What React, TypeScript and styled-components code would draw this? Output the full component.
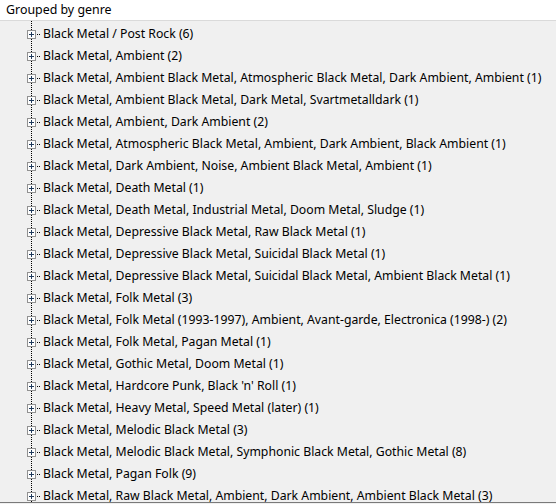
import React from "react";
import styled, { createGlobalStyle } from "styled-components";

const genres: string[] = [
    "Black Metal / Post Rock (6)",
    "Black Metal, Ambient (2)",
    "Black Metal, Ambient Black Metal, Atmospheric Black Metal, Dark Ambient, Ambient (1)",
    "Black Metal, Ambient Black Metal, Dark Metal, Svartmetalldark (1)",
    "Black Metal, Ambient, Dark Ambient (2)",
    "Black Metal, Atmospheric Black Metal, Ambient, Dark Ambient, Black Ambient (1)",
    "Black Metal, Dark Ambient, Noise, Ambient Black Metal, Ambient (1)",
    "Black Metal, Death Metal (1)",
    "Black Metal, Death Metal, Industrial Metal, Doom Metal, Sludge (1)",
    "Black Metal, Depressive Black Metal, Raw Black Metal (1)",
    "Black Metal, Depressive Black Metal, Suicidal Black Metal (1)",
    "Black Metal, Depressive Black Metal, Suicidal Black Metal, Ambient Black Metal (1)",
    "Black Metal, Folk Metal (3)",
    "Black Metal, Folk Metal (1993-1997), Ambient, Avant-garde, Electronica (1998-) (2)",
    "Black Metal, Folk Metal, Pagan Metal (1)",
    "Black Metal, Gothic Metal, Doom Metal (1)",
    "Black Metal, Hardcore Punk, Black 'n' Roll (1)",
    "Black Metal, Heavy Metal, Speed Metal (later) (1)",
    "Black Metal, Melodic Black Metal (3)",
    "Black Metal, Melodic Black Metal, Symphonic Black Metal, Gothic Metal (8)",
    "Black Metal, Pagan Folk (9)",
    "Black Metal, Raw Black Metal, Ambient, Dark Ambient, Ambient Black Metal (3)",
];

const GlobalStyle = createGlobalStyle`
    html, body {
        margin: 0;
        padding: 0;
        background: #f0f0f0;
        overflow: hidden;
    }
    body {
        font-family: "Noto Sans", "Open Sans", sans-serif;
        font-size: 12.25px;
        color: #000;
    }
`;

const Expander = () => (
    <ExpanderBox>
        <svg width="9" height="9" viewBox="0 0 9 9">
            <rect x="0.5" y="0.5" width="8" height="8" fill="#fdfdfd" stroke="#919191" />
            <path d="M2 4.5h5M4.5 2v5" stroke="#1e395b" strokeWidth="1" />
        </svg>
    </ExpanderBox>
);

const GenreRow = ({ label }: { label: string }) => (
    <Row>
        <Expander />
        <Connector />
        <Label>{label}</Label>
    </Row>
);

const App = () => {
    return (
        <>
            <GlobalStyle />
            <Panel>
                <Header>Grouped by genre</Header>
                <Tree>
                    {genres.map((g) => (
                        <GenreRow key={g} label={g} />
                    ))}
                </Tree>
                <Footer />
            </Panel>
        </>
    );
};

const Panel = styled.div`
    width: 556px;
    height: 504px;
    display: flex;
    flex-direction: column;
    background: #f0f0f0;
`;
const Header = styled.div`
    height: 21px;
    flex-shrink: 0;
    box-sizing: border-box;
    background: #fff;
    border-bottom: 1px solid #dadada;
    padding: 1px 0 0 6px;
    line-height: 18px;
    font-size: 12.4px;
`;
const Tree = styled.div`
    height: 481px;
    flex-shrink: 0;
    overflow: hidden;
    padding-top: 2px;
    box-sizing: border-box;
    background-color: #f0f0f0;
    background-image: repeating-linear-gradient(to bottom, #000 0 1px, transparent 1px 2px);
    background-size: 1px 100%;
    background-position: 31px 0;
    background-repeat: no-repeat;
`;
const Row = styled.div`
    height: 22px;
    display: flex;
    align-items: center;
    padding-left: 27px;
    white-space: nowrap;
`;
const ExpanderBox = styled.div`
    width: 9px;
    height: 9px;
    display: flex;
    svg {
        display: block;
    }
`;
const Connector = styled.div`
    width: 4px;
    height: 1px;
    margin: 0 2px 0 1px;
    background-image: repeating-linear-gradient(to right, #000 0 1px, transparent 1px 2px);
`;
const Label = styled.div`
    line-height: 16px;
    padding-bottom: 1px;
`;
const Footer = styled.div`
    height: 2px;
    border-top: 1px solid #7a7a7a;
    background: #f0f0f0;
`;

export default App;
